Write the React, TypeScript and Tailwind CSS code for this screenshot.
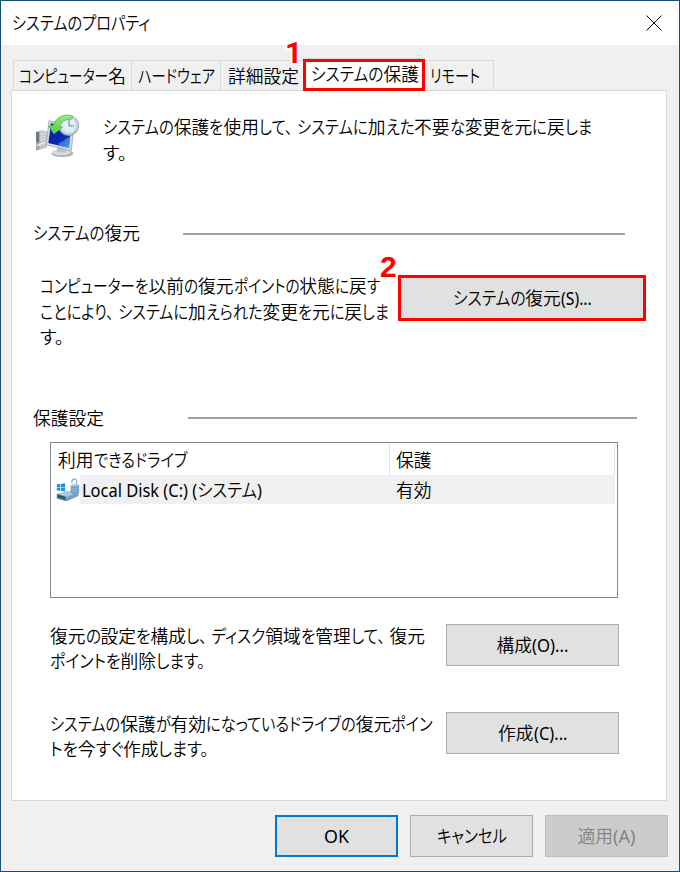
import { useLayoutEffect, useRef } from "react";

// Kanji keep their full width; kana and Latin runs are condensed so the line fits `w`.
function T({ w, children, size = 17.75 }: { w: number; children: string; size?: number }) {
  const ref = useRef<HTMLSpanElement>(null);
  const runs = children.match(/[\u4e00-\u9fff]+|[^\u4e00-\u9fff]+/g) || [];
  useLayoutEffect(() => {
    const root = ref.current;
    if (!root) return;
    const fit = Array.from(root.querySelectorAll<HTMLElement>("[data-fit]"));
    fit.forEach((e) => {
      e.style.width = "auto";
      (e.firstChild as HTMLElement).style.transform = "none";
    });
    const nat = fit.map((e) => e.getBoundingClientRect().width);
    const sum = nat.reduce((a, b) => a + b, 0);
    let solid = 0;
    root.querySelectorAll<HTMLElement>("[data-solid]").forEach((e) => {
      solid += e.getBoundingClientRect().width;
    });
    const s = (w - solid) / sum;
    fit.forEach((e, i) => {
      e.style.width = nat[i] * s + "px";
      (e.firstChild as HTMLElement).style.transform = `scaleX(${s})`;
    });
  }, [w, children]);
  return (
    <span ref={ref} className="flex whitespace-pre" style={{ width: w, fontSize: size }}>
      {runs.map((r, i) =>
        /[\u4e00-\u9fff]/.test(r) ? (
          <span key={i} data-solid="" className="shrink-0">{r}</span>
        ) : (
          <span key={i} data-fit="" className="block shrink-0">
            <span className="inline-block origin-left [font-feature-settings:'palt']">
              {(r.match(/、|[\x20-\x7e]+|[^、\x20-\x7e]+/g) || []).map((part, j) => (
                <span key={j} className={part === "、" ? "mr-[5px]" : /[\x20-\x7e]/.test(part) ? "font-normal" : undefined}>
                  {part}
                </span>
              ))}
            </span>
          </span>
        )
      )}
    </span>
  );
}

const btn = "flex shrink-0 items-center justify-center border border-[#adadad] bg-[#e1e1e1] pt-[2px]";

function RestoreIcon() {
  return (
    <svg viewBox="0 0 180 180" className="size-[60px] shrink-0">
      <defs>
        <linearGradient id="scr" x1="0" y1="0" x2="1" y2="1">
          <stop offset="0" stopColor="#0a1a98" />
          <stop offset="0.7" stopColor="#0a2cb8" />
          <stop offset="1" stopColor="#3f8ce0" />
        </linearGradient>
        <linearGradient id="grn" x1="0" y1="1" x2="1" y2="0">
          <stop offset="0" stopColor="#4fcf48" />
          <stop offset="1" stopColor="#a4ec8c" />
        </linearGradient>
      </defs>
      <path d="M18 80 L36 75 L56 82 L50 128 L30 134 L18 136Z" fill="#c3c8ca" />
      <path d="M18 80 L28 82 L28 112 L18 112Z" fill="#70797e" />
      <path d="M18 112 L28 112 L28 134 L18 136Z" fill="#9ba2a5" />
      <path d="M32 88 L48 86 M32 97 L47 94 M32 106 L47 102" stroke="#e2e6e8" strokeWidth="3" />
      <path d="M20 122 L46 112" stroke="#eef1f1" strokeWidth="4" />
      <ellipse cx="97" cy="145" rx="33" ry="11" fill="#a9afb2" />
      <ellipse cx="94" cy="142" rx="29" ry="9" fill="#d5dadb" />
      <path d="M82 123 L108 128 L108 142 L80 142Z" fill="#bcc3c8" />
      <path d="M57 47 L132 64 L124 137 L48 120Z" fill="#d3dae0" stroke="#929da7" strokeWidth="2" />
      <path d="M63 55 L123 69 L117 129 L55 114Z" fill="url(#scr)" />
      <path d="M84 121 Q90 108 99 109 Q108 98 120 96 L117 129Z" fill="#69b6f3" opacity=".5" />
      <circle cx="116" cy="62" r="31" fill="#93a2ad" />
      <circle cx="116" cy="61" r="28" fill="#cadce8" />
      <circle cx="116" cy="61" r="22" fill="#e2eff7" stroke="#a0b8c8" strokeWidth="3" strokeDasharray="2 7" />
      <path d="M117 40 L117 63 L131 63" fill="none" stroke="#5d87a8" strokeWidth="3" />
      <path d="M127 32 Q86 22 70 60 L56 64 L72 87 L98 66 L87 64 Q96 42 126 42Z" fill="url(#grn)" stroke="#4fa94b" strokeWidth="2" />
    </svg>
  );
}

function DiskIcon() {
  return (
    <svg viewBox="20 20 72 76" className="h-[25px] w-6 shrink-0">
      <path d="M22 42 L32 41 V51 H22Z M34 41 L47 39 V51 H34Z M22 53 H32 V62 L22 61Z M34 53 H47 V64 L34 62Z" fill="#1f8fdf" />
      <path d="M22 71 L55 62 L88 66 L52 80Z" fill="#a9c9dc" />
      <path d="M22 71 L52 80 V94 L22 85Z" fill="#47778f" />
      <path d="M52 80 L88 66 V78 L52 94Z" fill="#729fba" />
      <path d="M25 77 L47 84" stroke="#244b5d" strokeWidth="4" />
      <path d="M68 38 V33 Q69 26 76 26 Q82 26 82 32 V46" fill="none" stroke="#9cb5c4" strokeWidth="4" />
      <path d="M64 46 L75 41 L90 44 V68 L76 73 L64 68Z" fill="#719fc4" />
      <path d="M64 46 L75 41 L90 44 L77 49Z" fill="#bad4e5" />
      <path d="M66 54 L76 57 L89 52 M66 61 L76 64 L89 59" fill="none" stroke="#a8cae0" strokeWidth="2" />
    </svg>
  );
}

export default function App() {
  return (
    <div className="flex h-[872px] w-[680px] flex-col border border-[#1b4f72] bg-[#f0f0f0] font-['Noto_Sans','Noto_Sans_CJK_JP',sans-serif] font-[350] leading-[25.5px] text-black">
      <div className="flex h-11 shrink-0 items-center justify-between bg-white pl-[11px] pr-[17px]">
        <div className="pt-px"><T w={138}>システムのプロパティ</T></div>
        <svg viewBox="0 0 16 16" className="mb-px size-4">
          <path d="M.5 .5 15.5 15.5 M15.5 .5 .5 15.5" stroke="#000" strokeWidth="1" />
        </svg>
      </div>

      <div className="relative z-10 -mb-[2px] ml-3 mt-[13px] flex h-[34px] shrink-0 items-start">
        <div className="mt-[2px] flex h-[31px] w-[119px] items-center border border-b-0 border-[#d9d9d9] pl-[5px] pt-[2px]"><T w={107}>コンピューター名</T></div>
        <div className="-ml-px mt-[2px] flex h-[31px] w-[90px] items-center border border-b-0 border-[#d9d9d9] pl-[6px] pt-[2px]"><T w={77}>ハードウェア</T></div>
        <div className="-ml-px mt-[2px] flex h-[31px] w-[84px] items-center border border-b-0 border-[#d9d9d9] pl-[7px] pt-[2px]"><T w={71}>詳細設定</T></div>
        <div className="relative -ml-px flex h-[33px] w-[122px] flex-col border-t border-[#d9d9d9]">
          <div className="flex h-8 shrink-0 items-center border-[3px] border-[#ff0000] bg-white pb-px pl-[5px]"><T w={108}>システムの保護</T></div>
          <span className="absolute -left-[18px] -top-[17px] font-[Roboto,sans-serif] text-[30px] font-bold leading-[22px] text-[#ff0000] [paint-order:stroke] [-webkit-text-stroke:3px_white]">1</span>
        </div>
        <div className="mt-[2px] flex h-[31px] w-[69px] items-center border border-b-0 border-l-0 border-[#d9d9d9] pl-[5px] pt-[2px]"><T w={50}>リモート</T></div>
      </div>

      <div className="ml-[10px] flex h-[711px] w-[656px] shrink-0 flex-col border border-[#d9d9d9] bg-white">
        <div className="flex h-[130px] shrink-0 pl-[18px] pt-[14px]">
          <RestoreIcon />
          <div className="ml-[13px] mt-[10px]">
            <T w={489}>システムの保護を使用して、システムに加えた不要な変更を元に戻しま</T>
            <T w={24}>す。</T>
          </div>
        </div>
        <div className="flex h-[26px] shrink-0 items-center pl-[21px]">
          <T w={107}>システムの復元</T>
          <div className="ml-[43px] h-[2px] w-[442px] bg-[#a0a0a0]" />
        </div>
        <div className="flex h-[158px] shrink-0 pl-[28px] pt-[27px]">
          <div className="w-[358px] shrink-0">
            <T w={340}>コンピューターを以前の復元ポイントの状態に戻す</T>
            <T w={349}>ことにより、システムに加えられた変更を元に戻しま</T>
            <T w={24}>す。</T>
          </div>
          <div className="relative mt-px flex h-[46px] w-[248px] items-center justify-center border-[3px] border-[#ff0000] bg-[#e1e1e1] pt-px">
            <T w={139}>システムの復元(S)...</T>
            <span className="absolute -left-[21px] -top-[22px] font-['Liberation_Sans',sans-serif] text-[30px] font-bold leading-[22px] text-[#ff0000] [paint-order:stroke] [-webkit-text-stroke:3px_white]">2</span>
          </div>
        </div>
        <div className="flex h-[26px] shrink-0 items-center pl-[21px]">
          <div className="pt-px"><T w={71}>保護設定</T></div>
          <div className="ml-[84px] h-[2px] w-[449px] bg-[#a0a0a0]" />
        </div>
        <div className="ml-[38px] mt-[11px] flex h-[156px] w-[568px] shrink-0 flex-col border border-[#828790] px-px pt-px">
          <div className="flex h-[31px] shrink-0 items-center">
            <div className="flex h-full w-[338px] items-center border-r border-[#e3e3e3] pl-[6px] pt-[2px]"><T w={129}>利用できるドライブ</T></div>
            <div className="flex h-full w-[225px] items-center border-r border-[#e3e3e3] pl-[6px] pt-[2px]"><T w={36}>保護</T></div>
          </div>
          <div className="flex h-[29px] shrink-0 items-center pl-[4px]">
            <DiskIcon />
            <div className="flex h-full w-[535px] items-center bg-[#f0f0f0] pl-[2px] pt-[2px]">
              <div className="w-[314px]"><T w={180}>Local Disk (C:) (システム)</T></div>
              <T w={36}>有効</T>
            </div>
          </div>
        </div>
        <div className="mt-[26px] flex h-[88px] shrink-0 pl-[38px]">
          <div className="w-[396px] shrink-0 leading-[25px]">
            <T w={375}>復元の設定を構成し、ディスク領域を管理して、復元</T>
            <T w={155}>ポイントを削除します。</T>
          </div>
          <div className={btn + " h-[42px] w-[173px]"}><T w={72}>構成(O)...</T></div>
        </div>
        <div className="flex shrink-0 pl-[38px]">
          <div className="w-[396px] shrink-0 leading-[25px]">
            <T w={383}>システムの保護が有効になっているドライブの復元ポイン</T>
            <T w={159}>トを今すぐ作成します。</T>
          </div>
          <div className={btn + " h-[42px] w-[173px]"}><T w={69}>作成(C)...</T></div>
        </div>
      </div>

      <div className="mt-[14px] flex justify-end gap-3 pr-[11px]">
        <div className="flex h-[42px] w-[123px] items-center justify-center border-2 border-[#0078d7] bg-[#e1e1e1] pt-[2px]"><T w={25}>OK</T></div>
        <div className={btn + " h-[42px] w-[123px]"}><T w={70}>キャンセル</T></div>
        <div className="flex h-[42px] w-[123px] items-center justify-center border border-[#bfbfbf] bg-[#cccccc] pt-[2px] text-[#838383]"><T w={58}>適用(A)</T></div>
      </div>
    </div>
  );
}
